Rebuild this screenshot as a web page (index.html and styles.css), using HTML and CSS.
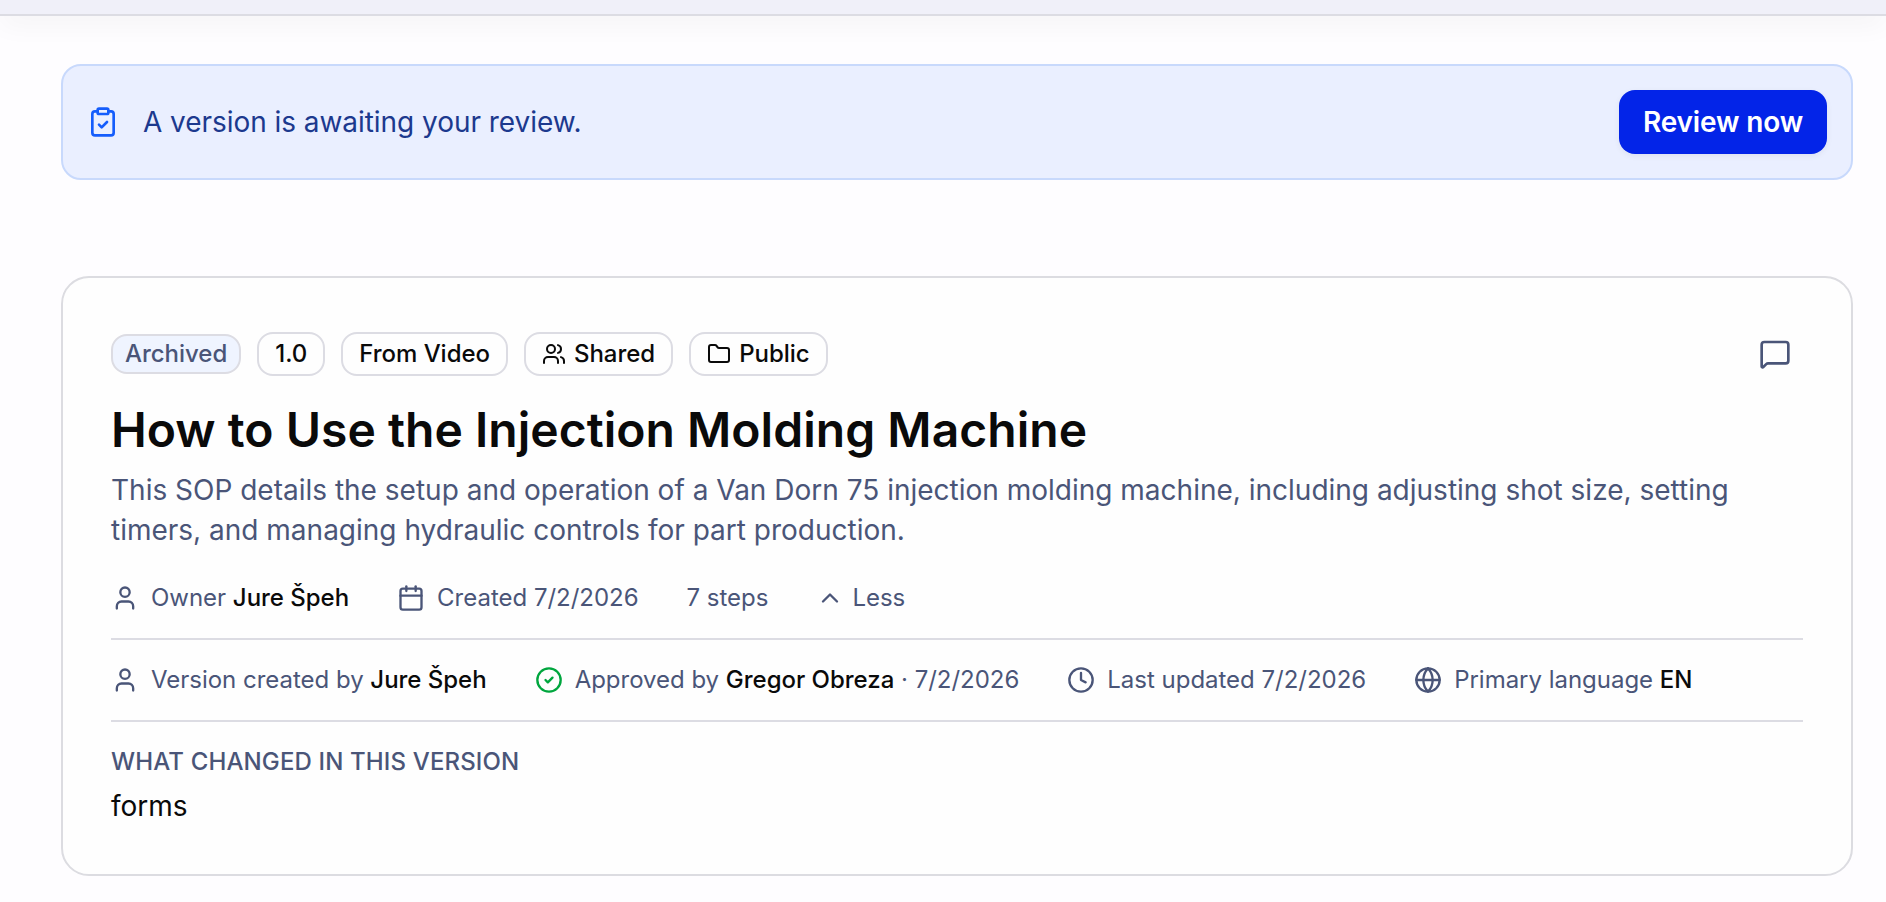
FILE: index.html
```
<!DOCTYPE html>
<html lang="en">
<head>
    <meta charset="UTF-8">
    <meta name="viewport" content="width=device-width, initial-scale=1.0">
    <title>How to Use the Injection Molding Machine</title>
    <link rel="stylesheet" href="styles.css">
</head>
<body>
    <header class="topbar"></header>

    <main class="page">
        <section class="banner">
            <svg class="icon icon-lg" viewBox="0 0 24 24"><rect x="8" y="2" width="8" height="4" rx="1"/><path d="M16 4h2a2 2 0 0 1 2 2v14a2 2 0 0 1-2 2H6a2 2 0 0 1-2-2V6a2 2 0 0 1 2-2h2"/><path d="m9 14 2 2 4-4"/></svg>
            <p>A version is awaiting your review.</p>
            <button type="button" class="review-btn">Review now</button>
        </section>

        <article class="card">
            <div class="card-top">
                <div class="badges">
                    <span class="badge archived">Archived</span>
                    <span class="badge">1.0</span>
                    <span class="badge">From Video</span>
                    <span class="badge">
                        <svg class="icon icon-sm" viewBox="0 0 24 24"><path d="M16 21v-2a4 4 0 0 0-4-4H6a4 4 0 0 0-4 4v2"/><circle cx="9" cy="7" r="4"/><path d="M22 21v-2a4 4 0 0 0-3-3.87"/><path d="M16 3.13a4 4 0 0 1 0 7.75"/></svg>
                        Shared
                    </span>
                    <span class="badge">
                        <svg class="icon icon-sm" viewBox="0 0 24 24"><path d="M20 20a2 2 0 0 0 2-2V8a2 2 0 0 0-2-2h-7.9a2 2 0 0 1-1.69-.9L9.6 3.9A2 2 0 0 0 7.93 3H4a2 2 0 0 0-2 2v13a2 2 0 0 0 2 2Z"/></svg>
                        Public
                    </span>
                </div>
                <button type="button" class="comment-btn" aria-label="Comments">
                    <svg class="icon icon-lg" viewBox="0 0 24 24"><path d="M22 17a2 2 0 0 1-2 2H6.828a2 2 0 0 0-1.414.586l-2.202 2.202A.71.71 0 0 1 2 21.286V5a2 2 0 0 1 2-2h16a2 2 0 0 1 2 2z"/></svg>
                </button>
            </div>

            <h1>How to Use the Injection Molding Machine</h1>
            <p class="description">This SOP details the setup and operation of a Van Dorn 75 injection molding machine, including adjusting shot size, setting timers, and managing hydraulic controls for part production.</p>

            <div class="meta">
                <span class="meta-item">
                    <svg class="icon" viewBox="0 0 24 24"><path d="M19 21v-2a4 4 0 0 0-4-4H9a4 4 0 0 0-4 4v2"/><circle cx="12" cy="7" r="4"/></svg>
                    <span>Owner <strong>Jure Špeh</strong></span>
                </span>
                <span class="meta-item">
                    <svg class="icon" viewBox="0 0 24 24"><path d="M8 2v4"/><path d="M16 2v4"/><rect x="3" y="4" width="18" height="18" rx="2"/><path d="M3 10h18"/></svg>
                    <span>Created 7/2/2026</span>
                </span>
                <span class="meta-item">7 steps</span>
                <span class="meta-item toggle">
                    <svg class="icon" viewBox="0 0 24 24"><path d="m18 15-6-6-6 6"/></svg>
                    <span>Less</span>
                </span>
            </div>

            <div class="meta divided">
                <span class="meta-item">
                    <svg class="icon" viewBox="0 0 24 24"><path d="M19 21v-2a4 4 0 0 0-4-4H9a4 4 0 0 0-4 4v2"/><circle cx="12" cy="7" r="4"/></svg>
                    <span>Version created by <strong>Jure Špeh</strong></span>
                </span>
                <span class="meta-item">
                    <svg class="icon approved" viewBox="0 0 24 24"><circle cx="12" cy="12" r="10"/><path d="m9 12 2 2 4-4"/></svg>
                    <span>Approved by <strong>Gregor Obreza</strong> · 7/2/2026</span>
                </span>
                <span class="meta-item">
                    <svg class="icon" viewBox="0 0 24 24"><circle cx="12" cy="12" r="10"/><path d="M12 6v6l4 2"/></svg>
                    <span>Last updated 7/2/2026</span>
                </span>
                <span class="meta-item">
                    <svg class="icon" viewBox="0 0 24 24"><circle cx="12" cy="12" r="10"/><path d="M12 2a14.5 14.5 0 0 0 0 20 14.5 14.5 0 0 0 0-20"/><path d="M2 12h20"/></svg>
                    <span>Primary language <strong>EN</strong></span>
                </span>
            </div>

            <div class="changes divided">
                <h2>What changed in this version</h2>
                <p>forms</p>
            </div>
        </article>
    </main>
</body>
</html>
```
FILE: styles.css
```
* {
    box-sizing: border-box;
}

body {
    margin: 0;
    background-color: #fefdff;
    color: #0a0a0a;
    font-family: Inter, "Liberation Sans", sans-serif;
    font-size: 28px;
    line-height: 40px;
}

h1, h2, p {
    margin: 0;
}

button {
    font: inherit;
    border: none;
    cursor: pointer;
}

.topbar {
    height: 16px;
    background-color: #f0f0f9;
    border-bottom: 2px solid #dcdce3;
    box-shadow: 0 6px 28px rgba(0, 0, 0, 0.06);
}

.page {
    padding: 48px 33px 26px 61px;
}

.icon {
    width: 28px;
    height: 28px;
    flex-shrink: 0;
    fill: none;
    stroke: currentColor;
    stroke-width: 2;
    stroke-linecap: round;
    stroke-linejoin: round;
}

.icon-sm {
    width: 24px;
    height: 24px;
}

.icon-lg {
    width: 32px;
    height: 32px;
}

/* review banner */
.banner {
    display: flex;
    align-items: center;
    gap: 24px;
    padding: 24px;
    background-color: #eaefff;
    border: 2px solid #c8d9fc;
    border-radius: 20px;
    color: #1c398e;
    letter-spacing: -0.05px;
}

.banner .icon {
    color: #155dfc;
}

.review-btn {
    width: 208px;
    height: 64px;
    margin-left: auto;
    padding: 0;
    background-color: #0324e8;
    border-radius: 16px;
    box-shadow: 0 2px 6px rgba(0, 0, 0, 0.06);
    color: white;
    font-weight: 600;
    letter-spacing: -0.15px;
    white-space: nowrap;
}

/* document card */
.card {
    margin-top: 96px;
    padding: 48px;
    background-color: #fefefe;
    border: 2px solid #dcdce1;
    border-radius: 28px;
}

.card-top {
    display: flex;
    justify-content: space-between;
    align-items: center;
}

.badges {
    display: flex;
    align-items: center;
    gap: 16px;
}

.badge {
    display: flex;
    align-items: center;
    gap: 8px;
    height: 44px;
    padding: 0 16px;
    border: 2px solid #dcdce3;
    border-radius: 16px;
    font-size: 24px;
    font-weight: 500;
    letter-spacing: -0.03px;
}

.archived {
    height: 40px;
    padding: 0 12px;
    background-color: #eff4ff;
    color: #4a5578;
}

.comment-btn {
    display: flex;
    align-items: center;
    justify-content: center;
    width: 56px;
    height: 56px;
    padding: 0;
    background: none;
    color: #4a5578;
}

h1 {
    margin-top: 18px;
    font-size: 48px;
    font-weight: 600;
    line-height: 60px;
    letter-spacing: 0.03px;
}

.description {
    margin-top: 10px;
    color: #4a5578;
}

.meta {
    display: flex;
    gap: 48px;
    margin-top: 32px;
    color: #4a5578;
    font-size: 24px;
    line-height: 32px;
    letter-spacing: -0.02px;
}

.meta-item {
    display: flex;
    align-items: center;
    gap: 12px;
    white-space: nowrap;
}

.meta-item strong {
    color: #0a0a0a;
    font-weight: 500;
}

.toggle {
    gap: 8px;
}

.meta .approved {
    color: #00a63e;
}

.divided {
    margin-top: 24px;
    padding-top: 24px;
    border-top: 2px solid #dcdce3;
}

.changes h2 {
    margin-bottom: 8px;
    color: #4a5578;
    font-size: 24px;
    font-weight: 500;
    line-height: 32px;
    letter-spacing: 0.14px;
    text-transform: uppercase;
}
```
